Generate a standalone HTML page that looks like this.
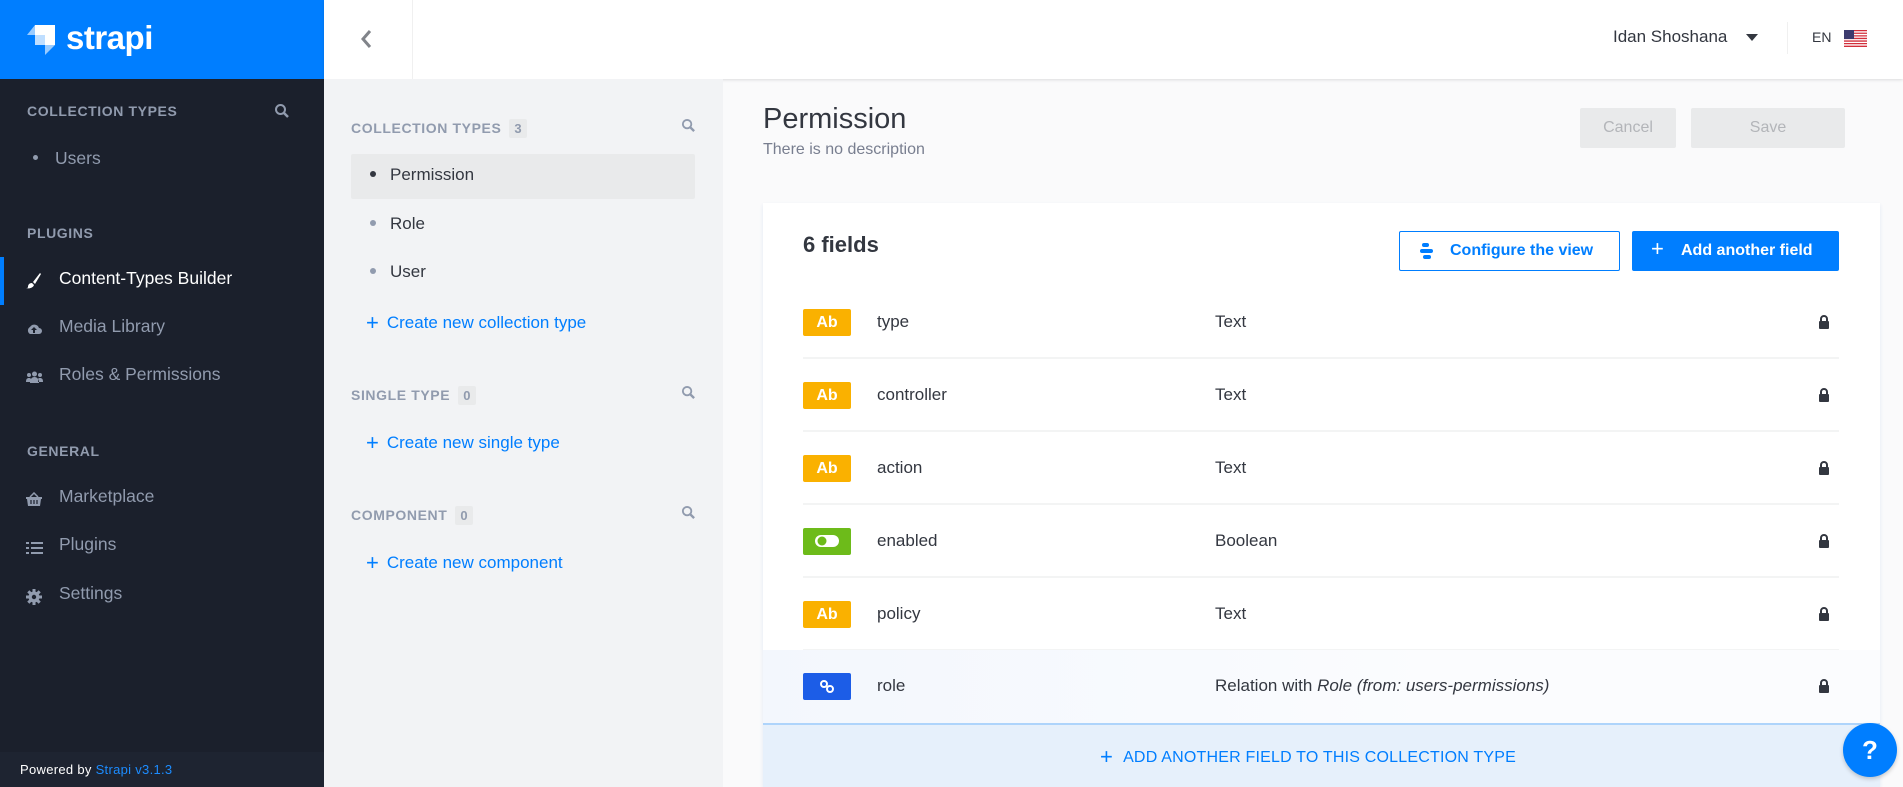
<!DOCTYPE html>
<html><head><meta charset="utf-8"><style>
*{margin:0;padding:0;box-sizing:border-box}
body{width:1903px;height:787px;overflow:hidden;position:relative;font-family:"Liberation Sans",sans-serif;background:#fafafb;color:#333740}
.a{position:absolute;white-space:nowrap}
.side{left:0;top:0;width:324px;height:787px;background:#1b202c}
.logo{left:0;top:0;width:324px;height:79px;background:#007eff}
.sh{font-size:14px;font-weight:bold;letter-spacing:.6px;color:#919bae}
.nav{font-size:17.5px;color:#919bae}
.col2{left:324px;top:79px;width:399px;height:708px;background:#f2f3f5}
.h2{font-size:14px;font-weight:bold;letter-spacing:.6px;color:#919bae}
.cnt{display:inline-block;background:#e9eaeb;color:#919bae;font-size:13px;padding:2px 5px;margin-left:8px;border-radius:2px}
.it{font-size:17px;color:#333740}
.dot{display:inline-block;width:6px;height:6px;border-radius:50%;background:#919bae;margin-right:14px;vertical-align:middle;position:relative;top:-2px}
.lnk{font-size:17px;color:#007eff}
.row{left:803px;width:1036px;height:73px}
.badge{position:absolute;left:0;top:23px;width:48px;height:27px;border-radius:2px;color:#fff;font-weight:bold;font-size:16px;text-align:center;line-height:27px}
.nm{position:absolute;left:74px;top:26px;font-size:17px;color:#333740}
.tp{position:absolute;left:412px;top:26px;font-size:17px;color:#333740}
.lk{position:absolute;left:1015px;top:29px}
.sep{position:absolute;left:0;right:0;bottom:0;height:2px;background:#f3f4f4}
</style></head><body>
<div class="a side"></div>
<div class="a logo">
<svg class="a" style="left:27px;top:22px" width="36" height="34" viewBox="0 0 36 34"><path d="M8 3h20v20h-10v-10h-10z" fill="#fff"/><path d="M0 13h8v-10z" fill="#fff" opacity=".6"/><path d="M8 13h10v10h-10z" fill="#fff" opacity=".75"/><path d="M18 23h10l-10 10z" fill="#fff" opacity=".6"/></svg>
<div class="a" style="left:66px;top:20px;font-size:33px;font-weight:bold;color:#fff;letter-spacing:-.5px;line-height:36px">strapi</div>
</div>
<div class="a sh" style="left:27px;top:103px">COLLECTION TYPES</div>
<svg class="a" style="left:274px;top:103px" width="16" height="16" viewBox="0 0 16 16"><circle cx="6.5" cy="6.5" r="4.5" stroke="#919bae" stroke-width="2" fill="none"/><path d="M10 10l4 4" stroke="#919bae" stroke-width="2.5"/></svg>
<div class="a nav" style="left:33px;top:148px"><span class="dot" style="width:5px;height:5px;margin-right:17px"></span>Users</div>
<div class="a sh" style="left:27px;top:225px">PLUGINS</div>
<div class="a" style="left:0;top:257px;width:4px;height:48px;background:#007eff"></div>
<svg class="a" style="left:26px;top:272px" width="16" height="17" viewBox="0 0 16 17"><path d="M14 1l-7 9 2 2 6-10z" fill="#fff"/><path d="M6 11c-3 0-4 2-4 4 0 1-1 1-2 1 3 1 7 0 8-3z" fill="#fff"/></svg>
<div class="a nav" style="left:59px;top:268px;color:#fff">Content-Types Builder</div>
<svg class="a" style="left:26px;top:321px" width="16" height="14" viewBox="0 0 16 14"><path d="M4 13a4 4 0 0 1 0-7 5 5 0 0 1 9 1 3 3 0 0 1 0 6z" fill="#919bae"/><path d="M8 6l-3 3h2v3h2v-3h2z" fill="#1b202c"/></svg>
<div class="a nav" style="left:59px;top:316px">Media Library</div>
<svg class="a" style="left:26px;top:370px" width="17" height="13" viewBox="0 0 17 13"><circle cx="8.5" cy="4" r="2.5" fill="#919bae"/><circle cx="3" cy="5" r="2" fill="#919bae"/><circle cx="14" cy="5" r="2" fill="#919bae"/><path d="M4 13c0-4 2-6 4.5-6s4.5 2 4.5 6z M0 12c0-3 1-4 3-4s2 1 2 2v2z M17 12c0-3-1-4-3-4s-2 1-2 2v2z" fill="#919bae"/></svg>
<div class="a nav" style="left:59px;top:364px">Roles &amp; Permissions</div>
<div class="a sh" style="left:27px;top:443px">GENERAL</div>
<svg class="a" style="left:26px;top:492px" width="16" height="14" viewBox="0 0 16 14"><path d="M4 5l4-4 4 4" stroke="#919bae" stroke-width="1.5" fill="none"/><path d="M0 5h16v2h-1l-1 7h-12l-1-7h-1z" fill="#919bae"/><path d="M5 8v4M8 8v4M11 8v4" stroke="#1b202c" stroke-width="1.2"/></svg>
<div class="a nav" style="left:59px;top:486px">Marketplace</div>
<svg class="a" style="left:26px;top:541px" width="17" height="14" viewBox="0 0 17 14"><path d="M0 1h3v2h-3zM5 1h12v2h-12zM0 6h3v2h-3zM5 6h12v2h-12zM0 11h3v2h-3zM5 11h12v2h-12z" fill="#919bae"/></svg>
<div class="a nav" style="left:59px;top:534px">Plugins</div>
<svg class="a" style="left:26px;top:589px" width="16" height="16" viewBox="0 0 16 16"><circle cx="8" cy="8" r="5.5" fill="#919bae"/><path d="M8 0v16M0 8h16M2.3 2.3l11.4 11.4M13.7 2.3l-11.4 11.4" stroke="#919bae" stroke-width="3"/><circle cx="8" cy="8" r="2.2" fill="#1b202c"/></svg>
<div class="a nav" style="left:59px;top:583px">Settings</div>
<div class="a" style="left:0;top:752px;width:324px;height:35px;background:#1e2431"></div>
<div class="a" style="left:20px;top:762px;font-size:13px;color:#fff;letter-spacing:.3px">Powered by <span style="color:#1c8cff">Strapi v3.1.3</span></div>

<div class="a" style="left:324px;top:0;width:1579px;height:79px;background:#fff;box-shadow:0 1px 3px rgba(0,0,0,.12)"></div>
<div class="a" style="left:412px;top:0;width:1px;height:79px;background:#f0f0f0"></div>
<svg class="a" style="left:359px;top:28px" width="14" height="22" viewBox="0 0 14 22"><path d="M11 3l-7 8 7 8" stroke="#81848a" stroke-width="3" fill="none"/></svg>
<div class="a" style="left:1613px;top:27px;font-size:17px;color:#333740">Idan Shoshana</div>
<svg class="a" style="left:1746px;top:34px" width="12" height="8" viewBox="0 0 12 8"><path d="M0 0h12l-6 7z" fill="#333740"/></svg>
<div class="a" style="left:1787px;top:22px;width:1px;height:32px;background:#f0f0f0"></div>
<div class="a" style="left:1812px;top:29px;font-size:14px;color:#333740">EN</div>
<svg class="a" style="left:1844px;top:30px" width="23" height="17" viewBox="0 0 23 17"><rect width="23" height="17" fill="#fff"/><path d="M0 0h23v1.3H0zM0 2.6h23v1.3H0zM0 5.2h23v1.3H0zM0 7.8h23v1.3H0zM0 10.4h23v1.3H0zM0 13h23v1.3H0zM0 15.6h23V17H0z" fill="#d22f3b"/><rect width="10" height="9" fill="#3c3b6e"/></svg>

<div class="a col2"></div>
<div class="a h2" style="left:351px;top:119px">COLLECTION TYPES<span class="cnt">3</span></div>
<svg class="a" style="left:681px;top:118px" width="15" height="15" viewBox="0 0 16 16"><circle cx="6.5" cy="6.5" r="4.5" stroke="#919bae" stroke-width="2" fill="none"/><path d="M10 10l4 4" stroke="#919bae" stroke-width="2.5"/></svg>
<div class="a" style="left:351px;top:154px;width:344px;height:45px;background:#e9eaeb;border-radius:2px"></div>
<div class="a it" style="left:370px;top:165px"><span class="dot" style="background:#333740"></span>Permission</div>
<div class="a it" style="left:370px;top:214px"><span class="dot"></span>Role</div>
<div class="a it" style="left:370px;top:262px"><span class="dot"></span>User</div>
<div class="a lnk" style="left:366px;top:310px"><span style="font-size:22px;font-weight:300;vertical-align:-2px;margin-right:8px">+</span>Create new collection type</div>
<div class="a h2" style="left:351px;top:386px">SINGLE TYPE<span class="cnt">0</span></div>
<svg class="a" style="left:681px;top:385px" width="15" height="15" viewBox="0 0 16 16"><circle cx="6.5" cy="6.5" r="4.5" stroke="#919bae" stroke-width="2" fill="none"/><path d="M10 10l4 4" stroke="#919bae" stroke-width="2.5"/></svg>
<div class="a lnk" style="left:366px;top:430px"><span style="font-size:22px;font-weight:300;vertical-align:-2px;margin-right:8px">+</span>Create new single type</div>
<div class="a h2" style="left:351px;top:506px">COMPONENT<span class="cnt">0</span></div>
<svg class="a" style="left:681px;top:505px" width="15" height="15" viewBox="0 0 16 16"><circle cx="6.5" cy="6.5" r="4.5" stroke="#919bae" stroke-width="2" fill="none"/><path d="M10 10l4 4" stroke="#919bae" stroke-width="2.5"/></svg>
<div class="a lnk" style="left:366px;top:550px"><span style="font-size:22px;font-weight:300;vertical-align:-2px;margin-right:8px">+</span>Create new component</div>

<div class="a" style="left:763px;top:103px;font-size:29px;color:#333740">Permission</div>
<div class="a" style="left:763px;top:141px;font-size:16px;color:#787e8f">There is no description</div>
<div class="a" style="left:1580px;top:108px;width:96px;height:40px;background:#e9eaeb;border-radius:2px;color:#b3b5b9;font-size:16px;text-align:center;line-height:40px">Cancel</div>
<div class="a" style="left:1691px;top:108px;width:154px;height:40px;background:#e9eaeb;border-radius:2px;color:#b3b5b9;font-size:16px;text-align:center;line-height:40px">Save</div>

<div class="a" style="left:763px;top:203px;width:1117px;height:584px;background:#fff;box-shadow:0 2px 4px #e3e9f3"></div>
<div class="a" style="left:803px;top:232px;font-size:22px;font-weight:bold;color:#333740">6 fields</div>
<div class="a" style="left:1399px;top:231px;width:221px;height:40px;border:1px solid #007eff;border-radius:2px;background:#fff;color:#007eff;font-size:16px;font-weight:bold;line-height:38px;padding-left:50px">Configure the view</div>
<svg class="a" style="left:1420px;top:242px" width="14" height="18" viewBox="0 0 14 18"><rect x="2" y="1" width="7" height="4" rx="2" fill="#007eff"/><rect x="0" y="7" width="13" height="4" rx="2" fill="#007eff"/><rect x="3" y="13" width="8" height="4" rx="2" fill="#007eff"/></svg>
<div class="a" style="left:1632px;top:231px;width:207px;height:40px;background:#007eff;border-radius:2px;color:#fff;font-size:16px;font-weight:bold;line-height:40px;padding-left:49px">Add another field</div>
<div class="a" style="left:1651px;top:236px;font-size:22px;color:#fff;font-weight:300">+</div>

<div class="a row" style="top:286px"><div class="badge" style="background:#fab100">Ab</div><div class="nm">type</div><div class="tp">Text</div><svg class="lk" width="12" height="14" viewBox="0 0 12 14"><path d="M3 6V4a3 3 0 0 1 6 0v2" stroke="#333740" stroke-width="2" fill="none"/><rect x="1" y="6" width="10" height="8" rx="1" fill="#333740"/></svg><div class="sep"></div></div>
<div class="a row" style="top:359px"><div class="badge" style="background:#fab100">Ab</div><div class="nm">controller</div><div class="tp">Text</div><svg class="lk" width="12" height="14" viewBox="0 0 12 14"><path d="M3 6V4a3 3 0 0 1 6 0v2" stroke="#333740" stroke-width="2" fill="none"/><rect x="1" y="6" width="10" height="8" rx="1" fill="#333740"/></svg><div class="sep"></div></div>
<div class="a row" style="top:432px"><div class="badge" style="background:#fab100">Ab</div><div class="nm">action</div><div class="tp">Text</div><svg class="lk" width="12" height="14" viewBox="0 0 12 14"><path d="M3 6V4a3 3 0 0 1 6 0v2" stroke="#333740" stroke-width="2" fill="none"/><rect x="1" y="6" width="10" height="8" rx="1" fill="#333740"/></svg><div class="sep"></div></div>
<div class="a row" style="top:505px"><div class="badge" style="background:#6dbb1a"><svg style="margin-top:6px" width="26" height="14" viewBox="0 0 26 14"><rect x="1" y="1" width="24" height="12" rx="6" fill="#fff"/><circle cx="8" cy="7" r="4.5" fill="#6dbb1a"/></svg></div><div class="nm">enabled</div><div class="tp">Boolean</div><svg class="lk" width="12" height="14" viewBox="0 0 12 14"><path d="M3 6V4a3 3 0 0 1 6 0v2" stroke="#333740" stroke-width="2" fill="none"/><rect x="1" y="6" width="10" height="8" rx="1" fill="#333740"/></svg><div class="sep"></div></div>
<div class="a row" style="top:578px"><div class="badge" style="background:#fab100">Ab</div><div class="nm">policy</div><div class="tp">Text</div><svg class="lk" width="12" height="14" viewBox="0 0 12 14"><path d="M3 6V4a3 3 0 0 1 6 0v2" stroke="#333740" stroke-width="2" fill="none"/><rect x="1" y="6" width="10" height="8" rx="1" fill="#333740"/></svg><div class="sep"></div></div>
<div class="a" style="left:763px;top:650px;width:1117px;height:73px;background:linear-gradient(90deg,#f3f7fd,#fbfcfe 60%,#fbfcfe)"></div>
<div class="a row" style="top:650px"><div class="badge" style="background:#1c5de7"><svg style="margin-top:6px" width="16" height="15" viewBox="0 0 16 15"><circle cx="5" cy="5" r="3" stroke="#fff" stroke-width="2" fill="none"/><circle cx="11" cy="10" r="3" stroke="#fff" stroke-width="2" fill="none"/></svg></div><div class="nm">role</div><div class="tp">Relation with <i>Role (from: users-permissions)</i></div><svg class="lk" width="12" height="14" viewBox="0 0 12 14"><path d="M3 6V4a3 3 0 0 1 6 0v2" stroke="#333740" stroke-width="2" fill="none"/><rect x="1" y="6" width="10" height="8" rx="1" fill="#333740"/></svg></div>
<div class="a" style="left:763px;top:723px;width:1117px;height:64px;background:#e6f0fb;border-top:2px solid #aed4fb"></div>
<div class="a" style="left:1100px;top:744px;font-size:16px;color:#007eff;letter-spacing:.2px"><span style="font-size:22px;font-weight:300;vertical-align:-2px;margin-right:10px">+</span>ADD ANOTHER FIELD TO THIS COLLECTION TYPE</div>
<div class="a" style="left:1843px;top:723px;width:54px;height:54px;border-radius:50%;background:#007eff;color:#fff;font-size:26px;font-weight:bold;text-align:center;line-height:54px;box-shadow:0 2px 4px rgba(0,0,0,.2)">?</div>
</body></html>
